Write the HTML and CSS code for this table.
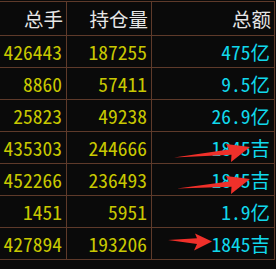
FILE: index.html
```html
<!DOCTYPE html>
<html>
<head>
<meta charset="utf-8">
<link rel="stylesheet" href="styles.css">
</head>
<body>
<div class="board">
  <div class="grid">
    <div class="cell head">总手</div>
    <div class="cell head">持仓量</div>
    <div class="cell head">总额</div>

    <div class="cell vol">426443</div>
    <div class="cell vol">187255</div>
    <div class="cell amt">475亿</div>

    <div class="cell vol">8860</div>
    <div class="cell vol">57411</div>
    <div class="cell amt">9.5亿</div>

    <div class="cell vol">25823</div>
    <div class="cell vol">49238</div>
    <div class="cell amt">26.9亿</div>

    <div class="cell vol">435303</div>
    <div class="cell vol">244666</div>
    <div class="cell amt">1845吉</div>

    <div class="cell vol">452266</div>
    <div class="cell vol">236493</div>
    <div class="cell amt">1845吉</div>

    <div class="cell vol">1451</div>
    <div class="cell vol">5951</div>
    <div class="cell amt">1.9亿</div>

    <div class="cell vol">427894</div>
    <div class="cell vol">193206</div>
    <div class="cell amt">1845吉</div>
  </div>
  <svg class="arrows" width="276" height="269" viewBox="0 0 276 269">
    <g fill="#f0302a">
      <polygon points="174,157.5 229,149.6 226,144 250,147 231,162 231.5,154.8"/>
      <polygon points="177,188.5 229,181.6 226,176 250,179 231,194 231.5,186.8"/>
      <polygon points="168,240 197,238.2 195,233.5 212,241.5 194,250.5 197,244"/>
    </g>
  </svg>
</div>
</body>
</html>
```

FILE: styles.css
```css
html, body {
  margin: 0;
  padding: 0;
  background: #0a0a0a;
}

.board {
  position: relative;
  width: 276px;
  height: 269px;
  overflow: hidden;
  background: #0a0a0a;
  padding-top: 1px;
  box-sizing: border-box;
}

.grid {
  display: grid;
  grid-template-columns: 67px 85px 123px;
  grid-auto-rows: 32px;
  grid-template-rows: 34px;
  border-top: 1px solid #5e3a2a;
  width: 275px;
}

.cell {
  border-right: 1px solid #5e3a2a;
  border-bottom: 1px solid #5e3a2a;
  display: flex;
  align-items: center;
  justify-content: flex-end;
  padding-right: 4px;
  padding-top: 1px;
  font-family: "Noto Sans CJK SC", sans-serif;
  font-size: 19.5px;
  font-feature-settings: "hwid" 1;
  line-height: 1;
  white-space: nowrap;
}

.head {
  color: #e6e6e6;
  padding-right: 3px;
}

.vol {
  color: #c8c800;
}

.amt {
  color: #10d8ec;
}

.arrows {
  position: absolute;
  left: 0;
  top: 0;
  pointer-events: none;
}
```
